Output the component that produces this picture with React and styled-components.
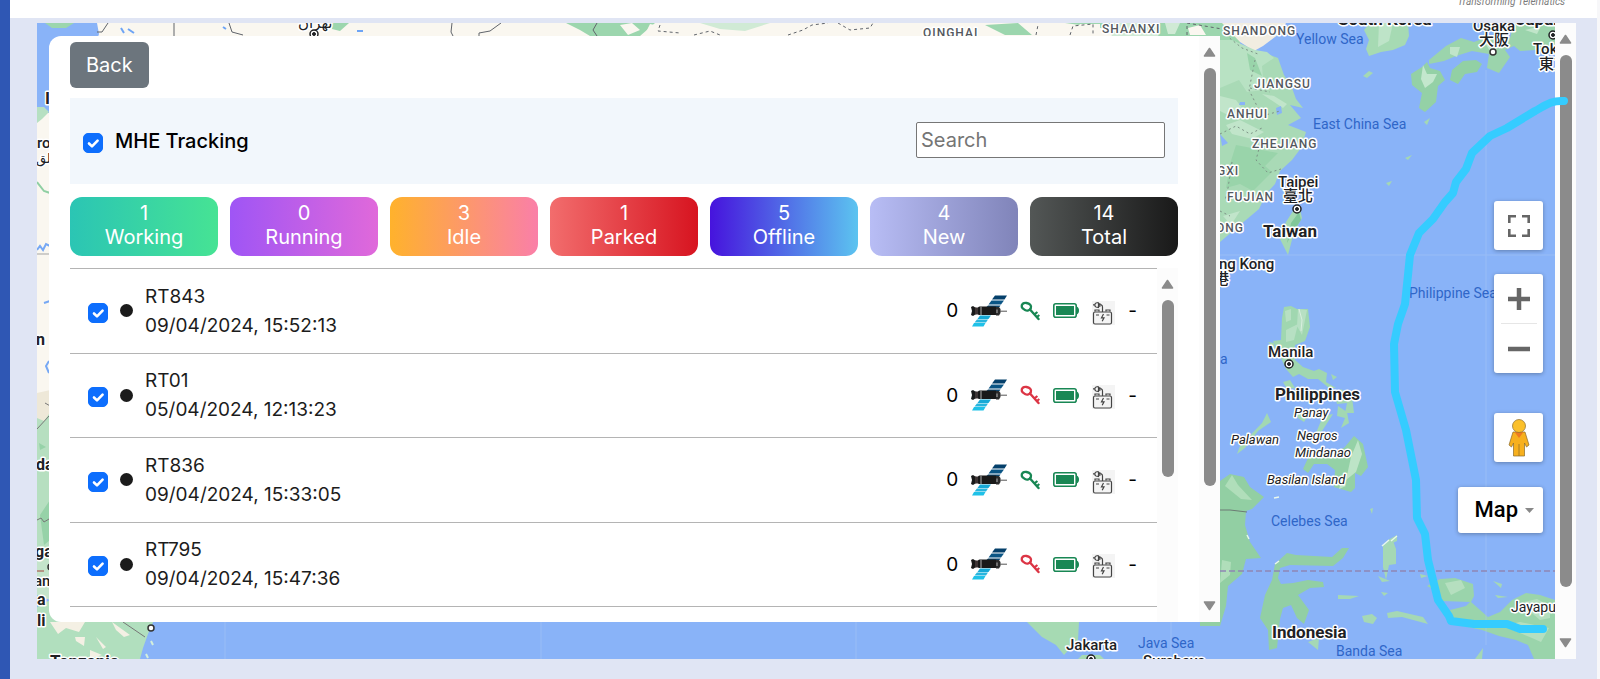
import React from "react";
import styled, { createGlobalStyle } from "styled-components";

const GlobalStyle = createGlobalStyle`
  * { box-sizing: border-box; }
  body { margin: 0; background: #fff; font-family: Inter, "Open Sans", sans-serif; color: #1c1c1c; }
  button, input { font: inherit; }
`;

/* ---------- page frame ---------- */

const Page = styled.div`
  display: flex;
  min-height: 100vh;
`;
const SideRail = styled.div`
  flex: 0 0 10px;
  background: #2f57b4;
`;
const Main = styled.main`
  flex: 1;
  min-width: 0;
  display: flex;
  flex-direction: column;
  background: #e0e5f4;
`;
const PageEdge = styled.div`
  flex: 0 0 3px;
  background: #f7f7f9;
`;
const TopBar = styled.header`
  display: flex;
  justify-content: flex-end;
  height: 18px;
  padding-right: 32px;
  overflow: hidden;
  background: #fff;
`;
const Tagline = styled.span`
  font: italic 10px/4px Roboto, sans-serif;
  color: #7b7b7b;
`;
const Frame = styled.section`
  position: relative;
  flex: 1;
  display: grid;
  grid-template-columns: minmax(0, 1fr) 21px;
  margin: 5px 21px 20px 27px;
`;
const MapArea = styled.div`
  grid-row: 1;
  grid-column: 1;
  position: relative;
  overflow: hidden;
  background: #89b3f8;
`;
const MapDrawing = styled.svg`
  position: absolute;
  inset: 0;
  width: 100%;
  height: 100%;
`;
const RouteLayer = styled(MapDrawing)`
  pointer-events: none;
`;

/* ---------- scroll bar ---------- */

const Track = styled.div`
  display: flex;
  flex-direction: column;
  align-items: center;
  flex: 0 0 21px;
  gap: 11px;
  padding: ${(p) => (p.$open ? "11px 0 0" : "11px 0")};
  background: #fcfcfc;
`;
const Groove = styled.div`
  flex: 1;
  width: 12px;
`;
const Thumb = styled.div`
  height: ${(p) => p.$size}%;
  border-radius: 6px;
  background: #8b8b8b;
`;
const FrameScroll = styled.div`
  grid-row: 1;
  grid-column: 2;
  display: flex;
`;

function Arrow({ down }) {
  return (
    <svg width="13" height="10" viewBox="0 0 13 10">
      <path
        d={down ? "M1.5 1H11.5L6.5 8.5Z" : "M1.5 9H11.5L6.5 1.5Z"}
        fill="#8b8b8b"
        stroke="#8b8b8b"
        strokeWidth="1.6"
        strokeLinejoin="round"
      />
    </svg>
  );
}

function ScrollBar({ size, open }) {
  return (
    <Track $open={open} aria-hidden="true">
      <Arrow />
      <Groove>
        <Thumb $size={size} />
      </Groove>
      {!open && <Arrow down />}
    </Track>
  );
}

/* ---------- panel ---------- */

const Panel = styled.div`
  grid-row: 1;
  grid-column: 1;
  z-index: 1;
  display: flex;
  margin: 13px 335px 37px 12px;
  overflow: hidden;
  border-radius: 12px 0 0 12px;
  background: #fff;
`;
const PanelBody = styled.div`
  flex: 1;
  min-width: 0;
  display: flex;
  flex-direction: column;
  padding: 6px 21px 0;
`;
const BackButton = styled.button`
  align-self: flex-start;
  height: 46px;
  padding: 0 16px;
  border: 0;
  border-radius: 6px;
  background: #6c757d;
  color: #fff;
  font-size: 20px;
  line-height: 30px;
`;
const GroupBar = styled.div`
  display: flex;
  align-items: center;
  justify-content: space-between;
  height: 86px;
  margin-top: 10px;
  padding: 0 13px;
  background: #f2f7fc;
`;
const GroupLabel = styled.label`
  display: flex;
  align-items: center;
  gap: 12px;
  font-size: 20px;
  font-weight: 500;
  color: #000;
`;
const SearchInput = styled.input`
  width: 249px;
  height: 36px;
  margin-bottom: 2px;
  padding: 0 4px;
  border: 1px solid #767676;
  border-radius: 2px;
  background: #fff;
  font-size: 20px;
  &::placeholder { color: #757575; }
`;
const Chips = styled.div`
  display: grid;
  grid-template-columns: repeat(7, 1fr);
  gap: 12px;
  margin: 13px 0 12px;
`;
const Chip = styled.button`
  display: flex;
  flex-direction: column;
  align-items: center;
  height: 59px;
  padding: 4px 0 7px;
  border: 0;
  border-radius: 12px;
  background: linear-gradient(90deg, ${(p) => p.$from}, ${(p) => p.$to});
  color: #fff;
  font-size: 20px;
  line-height: 24px;
`;
const ListArea = styled.div`
  flex: 1;
  display: flex;
`;
const Rows = styled.ul`
  flex: 1;
  display: grid;
  grid-auto-rows: 1fr;
  margin: 0 0 15px;
  padding: 0;
  list-style: none;
  border-top: 1px solid #b4b4b4;
`;
const Row = styled.li`
  display: flex;
  align-items: center;
  justify-content: space-between;
  min-height: 76px;
  padding: 0 20px 0 18px;
  border-bottom: 1px solid #b4b4b4;
`;
const Vehicle = styled.label`
  display: flex;
  align-items: center;
  gap: 12px;
  font-size: 19px;
  line-height: 29px;
`;
const VehicleText = styled.span`
  display: flex;
  flex-direction: column;
`;
const Dot = styled.span`
  width: 13px;
  height: 13px;
  border-radius: 50%;
  background: #1b1b1b;
`;
const Status = styled.div`
  display: flex;
  align-items: center;
  gap: 13px;
  font-size: 19px;
  color: #000;
`;
const PlugBox = styled.span`
  display: flex;
  margin-top: 4px;
  background: #f4f4f4;
`;

const BoxWrap = styled.span`
  display: inline-grid;
  width: 20px;
  height: 20px;
  margin-top: 4px;
`;
const BoxInput = styled.input`
  grid-area: 1 / 1;
  appearance: none;
  width: 20px;
  height: 20px;
  margin: 0;
  border: 1px solid #0d6efd;
  border-radius: 5px;
  background: #fff;
  &:checked { background: #0d6efd; }
`;
const BoxMark = styled.svg`
  grid-area: 1 / 1;
  pointer-events: none;
`;

function CheckBox(props) {
  return (
    <BoxWrap>
      <BoxInput type="checkbox" defaultChecked {...props} />
      <BoxMark viewBox="0 0 20 20">
        <path d="M6 10.5L9 13.4L14.6 7.6" fill="none" stroke="#fff" strokeWidth="2.6" strokeLinecap="round" strokeLinejoin="round" />
      </BoxMark>
    </BoxWrap>
  );
}

function Satellite() {
  return (
    <svg width="36" height="32" viewBox="0 0 36 32">
      <path d="M24 .5H36L33.500 4.500H21Z" fill="#05406b" />
      <path d="M20.500 5.500H33L30 9.500H17.500Z" fill="#0a5585" />
      <path d="M17 10.500H29.500L28.500 12H15.500Z" fill="#0a4670" />
      <path d="M9 20.500H20L17.500 24H6.500Z" fill="#17a9d6" />
      <path d="M6 24.500H17L15 27.500H3.500Z" fill="#27b5de" />
      <path d="M3 28H14.500L12.500 31.500H1Z" fill="#1fc1e8" />
      <path d="M0 12L2 11L5 13V19L2 21L0 20L1 16Z" fill="#191919" />
      <rect x="4" y="12.500" width="5" height="7" fill="#3d3434" />
      <rect x="7" y="11.500" width="19" height="8.500" rx="1.500" fill="#191919" />
      <path d="M25 12H28L29.500 14V18L28 20.500H25Z" fill="#2b2b2b" />
      <path d="M26 14.500V18M10 12V20" stroke="#d8d8d8" strokeWidth=".8" />
      <path d="M29 16.200H36" stroke="#555" strokeWidth="1" />
    </svg>
  );
}

function KeyIcon({ color }) {
  return (
    <svg width="20" height="20" viewBox="0 0 20 20" fill="none" stroke={color} strokeWidth="2.400">
      <path d="M1.800 6C1.200 3.200 3.500 1.500 6.500 2C9.500 2.500 12 4.500 10.800 7.300C9.800 9.500 7.200 10 5 9C3.200 8.200 2.100 7.400 1.800 6Z" />
      <path d="M10 8.500L18.500 18" strokeLinecap="round" />
      <path d="M14.500 13.300L17.400 11M17 16L19.300 14" strokeWidth="2.200" />
    </svg>
  );
}

function BatteryIcon() {
  return (
    <svg width="26" height="15" viewBox="0 0 26 15" fill="#198754">
      <rect x=".8" y=".8" width="22.400" height="13.400" rx="2" fill="none" stroke="#198754" strokeWidth="1.600" />
      <rect x="3" y="3" width="18" height="9" />
      <path d="M23.500 3.500C25.200 4 26 5.500 26 7.500S25.200 11 23.500 11.500Z" />
    </svg>
  );
}

function PlugBattery() {
  return (
    <svg width="23" height="24" viewBox="0 0 23 24" fill="none" stroke="#444" strokeWidth="1.200">
      <rect x="1.500" y="11" width="18" height="12" rx="1.500" />
      <path d="M3 10.500V9H7V10.500M14 10.500V9H18V10.500" />
      <path d="M10.500 11V6C10.500 3.500 8.500 3.500 6.500 3.800M6.500 1.500V6.500L4 6C2.500 5.500 2.500 2.500 4 2L6.500 1.500M1 3.900H3M6.500 2.800H8.500M6.500 5.200H8.500" />
      <path d="M4 14H7M14.500 14H17.500" />
      <path d="M11.500 13L9.500 16.800H12L10.200 20.200" />
    </svg>
  );
}

/* ---------- map controls ---------- */

const Controls = styled.div`
  position: absolute;
  top: 178px;
  right: 12px;
  display: flex;
  flex-direction: column;
  align-items: flex-end;
`;
const ControlGroup = styled.div`
  display: flex;
  flex-direction: column;
  align-items: center;
  margin-bottom: ${(p) => p.$after}px;
  border-radius: 3px;
  background: #fff;
  box-shadow: 0 1px 4px rgba(0, 0, 0, 0.3);
`;
const ControlButton = styled.button`
  display: grid;
  place-items: center;
  width: 49px;
  height: 49px;
  padding: 0;
  border: 0;
  background: none;
`;
const Divider = styled.div`
  width: 36px;
  height: 1px;
  background: #e6e6e6;
`;
const MapTypeButton = styled.button`
  display: flex;
  align-items: center;
  gap: 7px;
  height: 46px;
  padding: 0 9px 0 17px;
  border: 0;
  background: none;
  color: #000;
  font: 500 22px/30px Roboto, sans-serif;
`;

/* ---------- map drawing ---------- */

const Label = styled.text`
  font-family: Roboto, "Noto Sans CJK TC", "DejaVu Sans", sans-serif;
  font-size: ${(p) => p.$size || 15}px;
  font-weight: ${(p) => p.$weight || 500};
  font-style: ${(p) => (p.$italic ? "italic" : "normal")};
  fill: ${(p) => p.$fill || "#202124"};
  stroke: ${(p) => (p.$plain ? "none" : "#fff")};
  stroke-width: 3px;
  stroke-linejoin: round;
  paint-order: stroke;
`;

const seas = [
  ["Yellow Sea", 1296, 44], ["East China Sea", 1313, 129], ["Philippine Sea", 1409, 298],
  ["Celebes Sea", 1271, 526], ["Banda Sea", 1336, 656], ["Java Sea", 1138, 648], ["a", 1220, 364],
];
const provinces = [
  ["QINGHAI", 923, 37], ["SHAANXI", 1102, 33], ["SHANDONG", 1223, 35], ["JIANGSU", 1254, 88],
  ["ANHUI", 1227, 118], ["ZHEJIANG", 1252, 148], ["GXI", 1217, 175], ["FUJIAN", 1227, 201], ["ONG", 1216, 232],
];
const cities = [
  ["Osaka", 1473, 31], ["大阪", 1479, 45], ["Tok", 1533, 54], ["東京", 1539, 69], ["Taipei", 1278, 187],
  ["臺北", 1283, 201], ["ng Kong", 1219, 269], ["港", 1214, 284], ["Manila", 1268, 357], ["Jakarta", 1066, 650],
  ["Surabaya", 1143, 666], ["تهران", 298, 28],
  ["ro", 37, 148], ["am", 34, 586],
];
const countries = [
  ["South Korea", 1338, 25], ["Japan", 1516, 25], ["Taiwan", 1263, 237], ["Philippines", 1275, 400],
  ["Indonesia", 1272, 638], ["Tanzania", 50, 667], ["I", 45, 104],
];
const edgeNames = [["n", 36, 345], ["da", 36, 470], ["ga", 35, 557], ["a", 37, 605], ["li", 37, 626]];
const islands = [
  ["Panay", 1294, 417], ["Negros", 1297, 440], ["Mindanao", 1295, 457], ["Palawan", 1231, 444], ["Basilan Island", 1267, 484],
];

function MapLand() {
  return (
    <g>
      {/* inner Asia and the Middle East */}
      <path d="M97 23H1225V40H97L99 34Z" fill="#faf7f0" />
      <path d="M45 23H74L66 28H52ZM330 23H349L340 31L332 29ZM566 23H655L640 36H590L580 30ZM985 25L1018 23L1032 35H1005ZM1065 23H1240V60H1200L1130 32Z" fill="#9cd6ae" />
      <path d="M700 23H770L745 31L720 29ZM1165 23H1180L1175 34H1168ZM1110 23H1160L1158 38H1112Z" fill="#d0ead5" />
      <path d="M620 25L632 23L640 30L628 35ZM650 24L660 26L655 35L645 34ZM1080 24H1100V35H1070ZM1188 28L1200 25L1206 35H1190Z" fill="#faf7f0" />
      <path d="M1222 23H1286L1279 34L1263 46L1254 51L1240 42Z" fill="#f1ede1" />
      <g fill="none" stroke="#60646b" strokeWidth="1">
        <path d="M108 23L102 32L97 32M174 23V36M229 23L232 32L243 35M452 23L451 32L453 36M501 23L490 31L479 33V36M597 23L593 30L597 36" />
        <path d="M660 25L658 31L680 33M694 35L710 31L720 35M788 35L803 30L812 25L828 23M838 23L850 30L870 28L873 23M1036 35L1038 25M1070 35L1073 26L1093 24V34M1187 35V23L1222 29" strokeDasharray="3 3" />
      </g>
      <path d="M121 28L124 33M128 29L134 33M223 27L226 29M357 31H363" stroke="#6ea4f5" strokeWidth="2" />

      {/* western edge */}
      <path d="M37 122L45 113H55V410H37Z" fill="#faf7f0" />
      <path d="M37 107H44L49 112L42 119L37 123Z" fill="#b6e0c2" />
      <path d="M37 182L44 191L50 193" fill="none" stroke="#8fcfa3" strokeWidth="2" />
      <path d="M37 250L40 246L43 250L46 244L50 246M44 303L50 301M49 361L46 366L49 373" fill="none" stroke="#76a8f4" strokeWidth="2" />
      <path d="M37 254H50" stroke="#a3a3a3" />
      <path d="M37 393L55 389V425H37Z" fill="#eee8d8" />
      <path d="M37 418L44 421L49 414H60V570H37Z" fill="#b6dfc0" />
      <path d="M39 443L46 447L40 450ZM40 515L50 500V540L44 545Z" fill="#96d2a8" />
      <path d="M37 429L49 416M45 403L52 407M37 520L41 518L44 522L49 519" fill="none" stroke="#777" />
      <path d="M37 560H60V588L50 600L37 595Z" fill="#c4e4cb" />
      <path d="M37 571H44" stroke="#b49484" strokeWidth="2" />
      <path d="M37 607L50 600L70 620H154L148 634L143 648L140 659H37Z" fill="#b1dfbe" />
      <path d="M50 622H85L79 632L66 628L58 634ZM75 637H85L84 646L76 641ZM96 637L106 647L103 649ZM112 622L130 635L124 637L116 630ZM90 650L102 655L90 659Z" fill="#f4f0e4" />
      <path d="M123 622L145 637" stroke="#777" />
      <path d="M151 641L153 645M146 654L148 658" stroke="#d4efdc" strokeWidth="2" />

      {/* east China */}
      <path d="M1218 52L1262 52L1278 58L1284 75L1292 88L1296 99L1303 108L1290 105L1301 118L1288 125L1306 132L1301 148L1292 160L1280 171L1275 184L1266 194L1259 209L1240 225L1220 242V560H1214Z" fill="#a9dab6" />
      <path d="M1220 40H1232L1255 50L1267 52L1274 58L1262 66L1264 90L1247 92L1239 80L1220 88Z" fill="#b8e2c3" />
      <path d="M1220 96L1236 100L1245 112L1234 118L1220 111ZM1262 94L1274 96L1287 104L1283 108ZM1226 125L1240 120L1264 132L1252 139L1232 134ZM1223 216L1240 211L1231 225Z" fill="#c1e5ca" />
      <path d="M1236 145L1262 150L1278 153L1265 166L1272 172L1253 191L1240 184L1226 188L1230 164ZM1247 53L1255 58L1262 76L1250 70Z" fill="#99d4aa" />
      <path d="M1276 108L1281 106L1282 113L1277 115ZM1220 134L1228 143L1222 146ZM1240 102H1245V105H1239Z" fill="#89b3f8" />
      <path d="M1222 32L1242 48L1258 54M1255 60L1249 90L1262 116L1280 111M1220 134L1236 126L1250 134L1264 127M1260 145L1256 160L1268 173L1281 169M1232 162L1228 188L1225 201M1220 211L1230 216M1250 88L1270 92" fill="none" stroke="#7d9286" strokeDasharray="2 3" />
      <path d="M1214 246L1220 242V475H1214Z" fill="#89b3f8" />

      {/* Taiwan */}
      <path d="M1300 209L1302 218L1294 232L1288 255L1280 239L1286 222L1293 211Z" fill="#a5d9b3" />
      <path d="M1299 212L1301 220L1293 232L1287 243L1291 223Z" fill="#80c799" />

      {/* Korea and Japan */}
      <path d="M1370 23H1408L1409 36L1405 45L1393 50L1381 52L1369 56L1366 49L1369 40L1364 30Z" fill="#a6dab3" />
      <path d="M1379 23H1393L1389 41L1378 47Z" fill="#bee4c8" />
      <path d="M1363 76L1369 71L1373 73L1367 78ZM1405 158L1412 155L1408 160ZM1386 183L1392 181L1389 186ZM1424 122L1430 118L1427 125Z" fill="#a4d8b4" />
      <path d="M1429 60L1446 46L1461 38L1474 42L1490 36L1510 38L1514 23H1555V54L1536 50L1520 51L1514 46L1505 50L1510 57L1499 73L1487 68L1489 54L1472 51L1456 56L1444 61L1429 64Z" fill="#9bd4ac" />
      <path d="M1450 47H1460L1457 57L1450 54ZM1485 43H1500L1490 51ZM1525 30L1541 26L1537 34Z" fill="#c0e5c9" />
      <path d="M1452 70L1463 61L1476 60L1482 64L1477 72L1465 74L1458 84L1450 80Z" fill="#92d0a4" />
      <path d="M1411 74L1422 67L1427 62L1430 68L1440 71L1445 80L1438 86L1436 102L1425 112L1419 108L1422 93L1412 85Z" fill="#94d1a6" />
      <path d="M1423 65L1427 74L1437 74L1433 82L1425 88L1421 79Z" fill="#c3e7cd" />

      {/* Philippines */}
      <path d="M1284 307L1291 306L1297 309L1308 309L1310 327L1305 341L1295 345V360L1303 367L1314 371L1319 369L1327 373L1326 382L1336 388L1329 388L1318 379L1308 379L1299 374L1293 377L1286 369L1273 341L1281 340L1282 318Z" fill="#a0d7b0" />
      <path d="M1298 309L1307 310L1302 335L1297 326ZM1286 330L1298 324L1294 340L1286 342ZM1285 311L1291 309V320L1286 322Z" fill="#b7e0c3" />
      <path d="M1299 309L1302 320L1301 331" stroke="#d9efdf" fill="none" />
      <path d="M1268 342L1274 343L1275 350ZM1283 382L1290 380L1295 388L1287 389ZM1341 389L1352 397L1354 413L1345 413L1347 403L1337 404L1335 396ZM1338 406L1347 412L1349 423L1341 428L1345 418L1337 416ZM1294 408L1311 411L1304 422L1298 418ZM1323 416L1333 414L1322 431L1316 433ZM1267 413L1271 422L1258 431L1245 448L1237 454L1240 446L1262 423ZM1331 374L1337 377L1333 380Z" fill="#a2d8b3" />
      <path d="M1354 436L1363 444L1368 467L1361 476L1355 473V488L1351 492L1334 487L1335 470L1327 464L1314 464L1308 473L1303 469L1309 456L1323 457L1344 448Z" fill="#94d1a6" />
      <path d="M1358 440L1362 454L1356 472L1346 480L1351 457ZM1341 482L1346 486L1339 489Z" fill="#bde4c7" />

      {/* Borneo */}
      <path d="M1220 481L1230 474L1244 477L1250 487L1264 497L1252 509L1246 511L1245 525L1250 542L1261 558L1246 559L1242 574L1228 586L1226 606L1220 626H1200V520Z" fill="#92cfa3" />
      <path d="M1232 475L1238 485L1252 500L1241 499L1225 486ZM1222 560L1231 562L1230 575L1220 583Z" fill="#b0deba" />
      <path d="M1220 510H1230L1247 512" fill="none" stroke="#6c7b74" />

      {/* Sulawesi, Moluccas */}
      <path d="M1275 564L1287 553L1296 555L1332 557L1342 548L1349 548L1343 558L1333 566L1290 565L1280 568L1278 578L1281 584L1293 583L1308 580L1323 582L1324 587L1310 588L1298 595L1309 610L1304 624L1297 618L1291 605L1283 608L1280 619L1277 648L1269 650L1268 630L1260 618L1265 595L1272 580Z" fill="#92cfa4" />
      <path d="M1383 546L1392 538L1396 549L1396 564L1389 565L1386 580L1383 567ZM1388 540L1397 535V541L1390 544ZM1378 576L1390 581L1382 582ZM1338 595L1359 596L1350 599H1338ZM1381 592L1388 593L1384 596ZM1362 616L1372 614L1377 618L1373 624L1364 622ZM1387 613L1397 611L1423 617L1428 624L1402 617L1388 618ZM1308 642L1319 638L1318 650ZM1475 659L1483 648L1482 659ZM1493 581L1502 584L1501 588ZM1495 595L1508 597L1498 598ZM1370 509L1373 508L1372 514ZM1420 574L1428 576L1421 578Z" fill="#a5d8b5" />
      <path d="M1382 546L1389 540M1391 541L1397 536M1275 564L1279 561M1247 535L1249 539M1274 498L1279 497" stroke="#e8f7ec" strokeWidth="1.500" />

      {/* New Guinea */}
      <path d="M1427 586L1440 579L1455 578L1473 584L1474 596L1471 602L1480 610L1488 617L1500 612L1512 600L1526 593L1540 595L1555 600V659H1534L1528 645L1516 640L1499 636L1482 630L1453 624L1450 610L1466 606L1470 602L1442 601L1438 592Z" fill="#9ad4ab" />
      <path d="M1445 583L1461 580L1465 588L1451 595ZM1503 626L1520 622L1549 628L1541 642L1532 638ZM1520 603L1537 599L1550 606V618L1540 620Z" fill="#b5dfbf" />

      {/* Sumatra and Java */}
      <path d="M1027 622H1079L1078 640L1064 655L1056 645L1042 637Z" fill="#a6dab3" />
      <path d="M1078 659L1082 655H1100L1104 659Z" fill="#a6dab3" />
    </g>
  );
}

const viewBox = "37 23 1518 636";

function WorldMap() {
  return (
    <MapDrawing viewBox={viewBox} preserveAspectRatio="xMinYMin slice" role="img" aria-label="Map of the western Pacific">
      <MapLand />
      <path d="M225 622V659M541 622V659M856 622V659M1171 622V659M1486 70V645M1220 255H1555" stroke="#a9c7f6" opacity=".5" />
      <path d="M1220 571H1555" stroke="#8f87b4" strokeWidth="1.500" strokeDasharray="6 3" />
      {seas.map(([t, x, y]) => <Label key={t} x={x} y={y} $size={14} $weight={400} $fill="#2f66c8" $plain>{t}</Label>)}
      {provinces.map(([t, x, y]) => <Label key={t} x={x} y={y} $size={12} $fill="#54585e" letterSpacing="1">{t}</Label>)}
      {cities.map(([t, x, y]) => <Label key={t} x={x} y={y}>{t}</Label>)}
      <Label x="36" y="163" $size={13} $weight={400}>لق</Label>
      {countries.map(([t, x, y]) => <Label key={t} x={x} y={y} $size={17} $weight={700}>{t}</Label>)}
      {edgeNames.map(([t, x, y]) => <Label key={t + y} x={x} y={y} $size={16} $weight={700}>{t}</Label>)}
      {islands.map(([t, x, y]) => <Label key={t} x={x} y={y} $size={13} $weight={400} $italic>{t}</Label>)}
      <Label x="1511" y="612" $size={14} $weight={400}>Jayapura</Label>
      {[[1297, 209], [1289, 364], [1091, 659], [1553, 35], [314, 34]].map(([x, y]) => (
        <g key={x} fill="#fff" stroke="#202124">
          <circle cx={x} cy={y} r="4" strokeWidth="1.500" />
          <circle cx={x} cy={y} r="1.500" fill="#202124" />
        </g>
      ))}
      {[[1493, 52], [151, 628], [51, 567]].map(([x, y]) => (
        <circle key={x} cx={x} cy={y} r="3" fill="#fff" stroke="#333" strokeWidth="1.500" />
      ))}
    </MapDrawing>
  );
}

function Pegman() {
  return (
    <svg width="22" height="38" viewBox="0 0 22 38" stroke="#8a6a2a" strokeWidth=".7">
      <path d="M5 13H17L21 26L18.500 28L16.500 24V37H5.500V24L3.500 28L1 26Z" fill="#f7b01e" />
      <path d="M6.500 13H15.500L11 19Z" fill="#ee7a22" stroke="none" />
      <path d="M11 25V37" />
      <circle cx="11" cy="7" r="6.500" fill="#fbc02a" />
    </svg>
  );
}

function MapControls() {
  return (
    <Controls>
      <ControlGroup $after={24}>
        <ControlButton aria-label="Toggle fullscreen view">
          <svg width="22" height="22" viewBox="0 0 22 22" fill="none" stroke="#666" strokeWidth="2.600">
            <path d="M1.300 8V1.300H8M14 1.300H20.700V8M20.700 14V20.700H14M8 20.700H1.300V14" />
          </svg>
        </ControlButton>
      </ControlGroup>
      <ControlGroup $after={40}>
        <ControlButton aria-label="Zoom in">
          <svg width="22" height="22" viewBox="0 0 22 22" stroke="#666" strokeWidth="4.500">
            <path d="M0 11H22M11 0V22" />
          </svg>
        </ControlButton>
        <Divider />
        <ControlButton aria-label="Zoom out">
          <svg width="22" height="22" viewBox="0 0 22 22" stroke="#666" strokeWidth="4.500">
            <path d="M0 11H22" />
          </svg>
        </ControlButton>
      </ControlGroup>
      <ControlGroup $after={25}>
        <ControlButton aria-label="Street View">
          <Pegman />
        </ControlButton>
      </ControlGroup>
      <ControlGroup $after={0}>
        <MapTypeButton>
          Map
          <svg width="9" height="5" viewBox="0 0 9 5"><path d="M0 0H9L4.500 5Z" fill="#888" /></svg>
        </MapTypeButton>
      </ControlGroup>
    </Controls>
  );
}

function Route() {
  return (
    <RouteLayer viewBox="37 23 1539 636" preserveAspectRatio="xMinYMin slice" aria-hidden="true">
      <path
        d="M1564 101C1552 100 1546 105 1535 111L1507 128L1490 136L1472 153L1466 169L1456 182L1453 193L1445 202L1433 219L1419 233L1410 255L1408 275L1405 304L1398 324L1394 344L1395 392L1406 430L1416 480L1417 518L1425 534L1428 560L1434 584L1438 600L1449 616L1451 621L1474 624H1507L1520 629H1543"
        fill="none" stroke="#35ccff" strokeWidth="8" strokeLinecap="round" strokeLinejoin="round"
      />
    </RouteLayer>
  );
}

/* ---------- data ---------- */

const chips = [
  [1, "Working", "#2bc5b4", "#46e394"],
  [0, "Running", "#9f55f5", "#e069da"],
  [3, "Idle", "#ffb22c", "#fa7fa8"],
  [1, "Parked", "#f26d6d", "#d71420"],
  [5, "Offline", "#4613dd", "#5cc4f0"],
  [4, "New", "#b8bdf5", "#8084b9"],
  [14, "Total", "#535756", "#191919"],
];
const vehicles = [
  ["RT843", "09/04/2024, 15:52:13", true],
  ["RT01", "05/04/2024, 12:13:23", false],
  ["RT836", "09/04/2024, 15:33:05", true],
  ["RT795", "09/04/2024, 15:47:36", false],
];

export default function App() {
  return (
    <Page>
      <GlobalStyle />
      <SideRail />
      <Main>
        <TopBar><Tagline>Transforming Telematics</Tagline></TopBar>
        <Frame>
          <MapArea>
            <WorldMap />
            <MapControls />
          </MapArea>
          <FrameScroll><ScrollBar size={93} /></FrameScroll>
          <Panel>
            <PanelBody>
              <BackButton>Back</BackButton>
              <GroupBar>
                <GroupLabel><CheckBox />MHE Tracking</GroupLabel>
                <SearchInput type="search" placeholder="Search" aria-label="Search" />
              </GroupBar>
              <Chips>
                {chips.map(([count, name, from, to]) => (
                  <Chip key={name} $from={from} $to={to}>
                    <span>{count}</span>
                    <span>{name}</span>
                  </Chip>
                ))}
              </Chips>
              <ListArea>
                <Rows>
                  {vehicles.map(([name, time, ignition]) => (
                    <Row key={name}>
                      <Vehicle>
                        <CheckBox />
                        <Dot />
                        <VehicleText>
                          <span>{name}</span>
                          <span>{time}</span>
                        </VehicleText>
                      </Vehicle>
                      <Status>
                        <span>0</span>
                        <Satellite />
                        <KeyIcon color={ignition ? "#198754" : "#dc3545"} />
                        <BatteryIcon />
                        <PlugBox><PlugBattery /></PlugBox>
                        <span>-</span>
                      </Status>
                    </Row>
                  ))}
                </Rows>
                <ScrollBar size={55} open />
              </ListArea>
            </PanelBody>
            <ScrollBar size={80} />
          </Panel>
          <Route />
        </Frame>
      </Main>
      <PageEdge />
    </Page>
  );
}
